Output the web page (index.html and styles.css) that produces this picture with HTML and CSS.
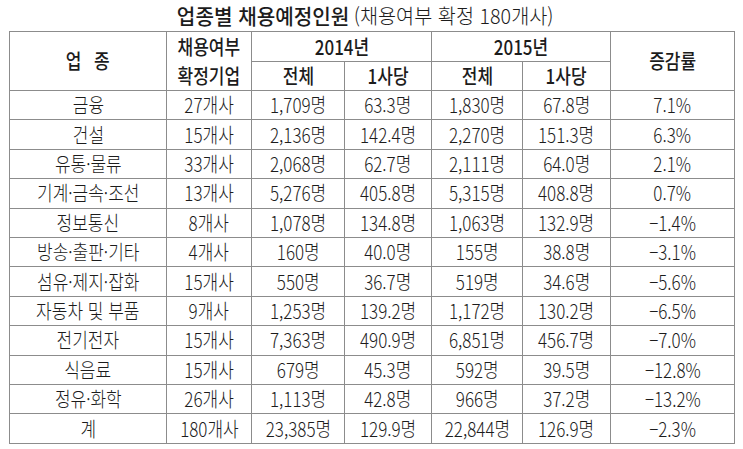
FILE: index.html
```html
<!DOCTYPE html>
<html lang="ko">
<head>
<meta charset="utf-8">
<title>업종별 채용예정인원</title>
<link rel="stylesheet" href="styles.css">
</head>
<body>
<div class="title"><span class="tt"><span class="tt-main">업종별 채용예정인원</span> <span class="tt-sub">(채용여부 확정 180개사)</span></span></div>
<table class="grid">
  <colgroup>
    <col class="c1"><col class="c2"><col class="c3"><col class="c4"><col class="c5"><col class="c6"><col class="c7">
  </colgroup>
  <thead>
    <tr class="h1">
      <th rowspan="2"><span class="t gap">업 종</span></th>
      <th rowspan="2"><span class="t two">채용여부<br>확정기업</span></th>
      <th colspan="2"><span class="t">2014년</span></th>
      <th colspan="2"><span class="t">2015년</span></th>
      <th rowspan="2"><span class="t">증감률</span></th>
    </tr>
    <tr class="h2">
      <th><span class="t">전체</span></th>
      <th><span class="t">1사당</span></th>
      <th><span class="t">전체</span></th>
      <th><span class="t">1사당</span></th>
    </tr>
  </thead>
  <tbody>
    <tr><td><span class="t">금융</span></td><td><span class="t">27개사</span></td><td><span class="t">1,709명</span></td><td><span class="t">63.3명</span></td><td><span class="t">1,830명</span></td><td><span class="t">67.8명</span></td><td><span class="t">7.1%</span></td></tr>
    <tr><td><span class="t">건설</span></td><td><span class="t">15개사</span></td><td><span class="t">2,136명</span></td><td><span class="t">142.4명</span></td><td><span class="t">2,270명</span></td><td><span class="t">151.3명</span></td><td><span class="t">6.3%</span></td></tr>
    <tr><td><span class="t">유통·물류</span></td><td><span class="t">33개사</span></td><td><span class="t">2,068명</span></td><td><span class="t">62.7명</span></td><td><span class="t">2,111명</span></td><td><span class="t">64.0명</span></td><td><span class="t">2.1%</span></td></tr>
    <tr><td><span class="t">기계·금속·조선</span></td><td><span class="t">13개사</span></td><td><span class="t">5,276명</span></td><td><span class="t">405.8명</span></td><td><span class="t">5,315명</span></td><td><span class="t">408.8명</span></td><td><span class="t">0.7%</span></td></tr>
    <tr><td><span class="t">정보통신</span></td><td><span class="t">8개사</span></td><td><span class="t">1,078명</span></td><td><span class="t">134.8명</span></td><td><span class="t">1,063명</span></td><td><span class="t">132.9명</span></td><td><span class="t">−1.4%</span></td></tr>
    <tr><td><span class="t">방송·출판·기타</span></td><td><span class="t">4개사</span></td><td><span class="t">160명</span></td><td><span class="t">40.0명</span></td><td><span class="t">155명</span></td><td><span class="t">38.8명</span></td><td><span class="t">−3.1%</span></td></tr>
    <tr><td><span class="t">섬유·제지·잡화</span></td><td><span class="t">15개사</span></td><td><span class="t">550명</span></td><td><span class="t">36.7명</span></td><td><span class="t">519명</span></td><td><span class="t">34.6명</span></td><td><span class="t">−5.6%</span></td></tr>
    <tr><td><span class="t">자동차 및 부품</span></td><td><span class="t">9개사</span></td><td><span class="t">1,253명</span></td><td><span class="t">139.2명</span></td><td><span class="t">1,172명</span></td><td><span class="t">130.2명</span></td><td><span class="t">−6.5%</span></td></tr>
    <tr><td><span class="t">전기전자</span></td><td><span class="t">15개사</span></td><td><span class="t">7,363명</span></td><td><span class="t">490.9명</span></td><td><span class="t">6,851명</span></td><td><span class="t">456.7명</span></td><td><span class="t">−7.0%</span></td></tr>
    <tr><td><span class="t">식음료</span></td><td><span class="t">15개사</span></td><td><span class="t">679명</span></td><td><span class="t">45.3명</span></td><td><span class="t">592명</span></td><td><span class="t">39.5명</span></td><td><span class="t">−12.8%</span></td></tr>
    <tr><td><span class="t">정유·화학</span></td><td><span class="t">26개사</span></td><td><span class="t">1,113명</span></td><td><span class="t">42.8명</span></td><td><span class="t">966명</span></td><td><span class="t">37.2명</span></td><td><span class="t">−13.2%</span></td></tr>
    <tr><td><span class="t">계</span></td><td><span class="t">180개사</span></td><td><span class="t">23,385명</span></td><td><span class="t">129.9명</span></td><td><span class="t">22,844명</span></td><td><span class="t">126.9명</span></td><td><span class="t">−2.3%</span></td></tr>
  </tbody>
</table>
</body>
</html>
```

FILE: styles.css
```css
html, body {
  margin: 0;
  padding: 0;
  background: #ffffff;
}
body {
  padding: 0 9px;
  font-family: "Noto Sans CJK KR", "Noto Sans", sans-serif;
  color: #1c1c1c;
}
.title {
  height: 21px;
  line-height: 21px;
  padding: 5px 14px 5px 0;
  text-align: center;
  width: 712px;
  white-space: nowrap;
}
.tt {
  display: inline-block;
  transform: scaleX(0.96);
}
.tt-main {
  font-size: 21px;
  font-weight: 500;
}
.tt-sub {
  font-size: 20.5px;
  font-weight: 300;
}
.grid {
  border-collapse: collapse;
  table-layout: fixed;
  width: 726px;
}
.c1 { width: 157px; }
.c2 { width: 85px; }
.c3 { width: 93px; }
.c4 { width: 87px; }
.c5 { width: 91px; }
.c6 { width: 88px; }
.c7 { width: 124px; }
.grid th,
.grid td {
  border: 1px solid #8c8c8c;
  padding: 0;
  text-align: center;
  vertical-align: middle;
  white-space: nowrap;
  font-size: 20px;
  line-height: 26px;
}
.grid th {
  font-weight: 500;
}
.grid td {
  font-weight: 300;
}
.h1 { height: 30px; }
.h2 { height: 29px; }
.grid tbody tr { height: 29.42px; }
.t {
  display: inline-block;
  transform: scaleX(0.85);
}
.two {
  line-height: 29px;
}
.gap {
  word-spacing: 9px;
}
```
